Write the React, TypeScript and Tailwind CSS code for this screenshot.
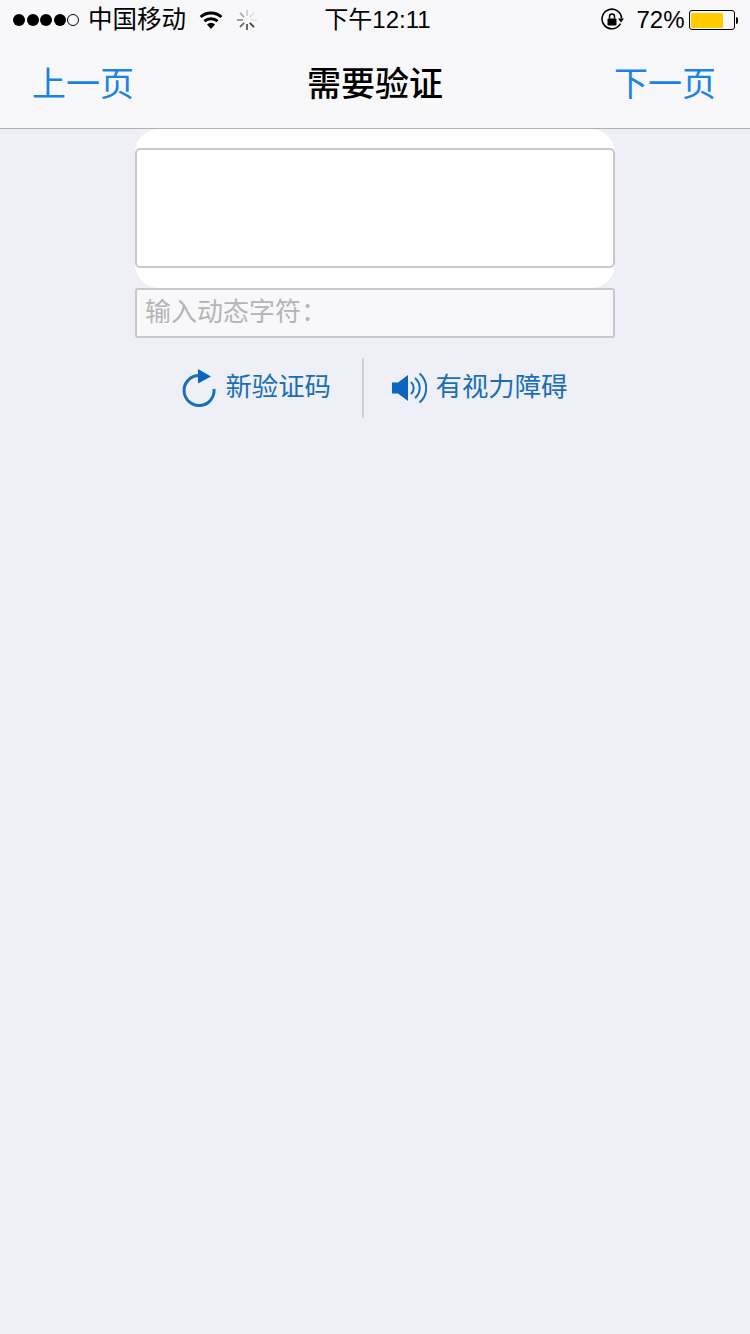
const cjk = "font-['Liberation_Sans','Noto_Sans_CJK_SC',sans-serif]"

function SignalDots() {
  return (
    <div className="flex items-center gap-[1.5px]">
      {[0, 1, 2, 3].map((i) => (
        <span key={i} className="w-[12px] h-[12px] rounded-full bg-black" />
      ))}
      <span className="w-[12px] h-[12px] rounded-full border border-black" />
    </div>
  )
}

function Wifi() {
  return (
    <svg width="24" height="18" viewBox="0 0 24 18">
      <path d="M12 18 L8 13.4 A6 6 0 0 1 16 13.4 Z" fill="#000" />
      <path d="M5.4 10.2 A10 10 0 0 1 18.6 10.2" fill="none" stroke="#000" strokeWidth="3" />
      <path d="M1.6 6 A15.5 15.5 0 0 1 22.4 6" fill="none" stroke="#000" strokeWidth="3" />
    </svg>
  )
}

function Spinner() {
  const colors = ["#333", "#444", "#666", "#888", "#aaa", "#ccc", "#ddd", "#e4e4e4"]
  return (
    <svg width="22" height="22" viewBox="0 0 22 22">
      {colors.map((c, i) => (
        <line
          key={i}
          x1="11"
          y1="1"
          x2="11"
          y2="7"
          stroke={c}
          strokeWidth="1.6"
          transform={`rotate(${135 + i * 45} 11 11)`}
        />
      ))}
    </svg>
  )
}

function RotationLock() {
  return (
    <svg width="24" height="24" viewBox="0 0 24 24">
      <path d="M20.5 15.5 A9.8 9.8 0 1 1 21.6 10.5" fill="none" stroke="#000" strokeWidth="1.6" />
      <path d="M18 10.5 L24 10.5 L21 14.5 Z" fill="#000" />
      <rect x="7.5" y="10.5" width="9" height="7" rx="1" fill="#000" />
      <path d="M9.5 10.5 V8.5 A2.5 2.5 0 0 1 14.5 8.5 V10.5" fill="none" stroke="#000" strokeWidth="1.5" />
    </svg>
  )
}

function Battery() {
  return (
    <div className="flex items-center">
      <div className="w-[46px] h-[20px] rounded-[3px] border border-black p-[1.5px]">
        <div className="h-full w-[32px] rounded-[1.5px] bg-[#ffcc00]" />
      </div>
      <div className="w-[2.5px] h-[7px] ml-[1px] rounded-r-full bg-black" />
    </div>
  )
}

function RefreshIcon() {
  return (
    <svg width="36" height="40" viewBox="0 0 36 40">
      <path d="M18 7.5 A15 15 0 1 0 33 21" fill="none" stroke="#1a6fb5" strokeWidth="3" />
      <path d="M17 1 L30 8.5 L17 15.5 Z" fill="#0a66bd" />
    </svg>
  )
}

function SpeakerIcon() {
  return (
    <svg width="36" height="32" viewBox="0 0 36 32">
      <path d="M1 10.5 H7 L17 3 V29 L7 21.5 H1 Z" fill="#0a66bd" />
      <path d="M20 10 A8 8 0 0 1 20 22" fill="none" stroke="#1a6fb5" strokeWidth="2" />
      <path d="M24 6 A13 13 0 0 1 24 26" fill="none" stroke="#1a6fb5" strokeWidth="2" />
      <path d="M28.5 1.5 A19 19 0 0 1 28.5 30.5" fill="none" stroke="#1a6fb5" strokeWidth="2" />
    </svg>
  )
}

export default function App() {
  return (
    <div className={`w-[750px] h-[1334px] flex flex-col bg-[#eeeff7] ${cjk}`}>
      <header className="bg-[#f8f8fa] border-b border-[#b2b2b4] h-[129px] shrink-0">
        <div className="h-[40px] grid grid-cols-[1fr_auto_1fr] items-center text-black">
          <div className="flex items-center pl-[13px]">
            <SignalDots />
            <span className="ml-[9px] text-[24.5px]">中国移动</span>
            <span className="ml-[13px]">
              <Wifi />
            </span>
            <span className="ml-[13px]">
              <Spinner />
            </span>
          </div>
          <div className="pl-[5px] text-[24px]">下午12:11</div>
          <div className="flex items-center justify-end pr-[12px]">
            <RotationLock />
            <span className="ml-[12px] mr-[4px] text-[24px]">72%</span>
            <Battery />
          </div>
        </div>
        <nav className="h-[88px] flex items-center justify-between pl-[32px] pr-[34px]">
          <span className="text-[34px] text-[#1a84e6]">上一页</span>
          <span className="ml-[2px] text-[34px] font-medium text-black">需要验证</span>
          <span className="text-[34px] text-[#1a84e6]">下一页</span>
        </nav>
      </header>

      <main className="w-[480px] mx-auto">
        <div className="h-[159px] py-[19px] bg-white rounded-[24px]">
          <div className="h-[120px] bg-white border-2 border-[#c9c9cc] rounded-[5px]" />
        </div>
        <div className="h-[50px] flex items-center pl-[8px] pb-[1px] bg-[#f8f8fa] border-2 border-[#c9c9cc] rounded-[3px] text-[26px] text-[#b4b4b6]">
          输入动态字符：
        </div>
        <div className="mt-[20px] h-[60px] flex items-center text-[26.4px] text-[#1a6fb5]">
          <div className="w-[227px] shrink-0 flex items-center justify-end pr-[31px] gap-[8px]">
            <RefreshIcon />
            <span>新验证码</span>
          </div>
          <div className="w-[1.5px] h-full bg-[#d0d0d6]" />
          <div className="flex items-center pl-[27px] gap-[9px]">
            <SpeakerIcon />
            <span>有视力障碍</span>
          </div>
        </div>
      </main>
    </div>
  )
}
